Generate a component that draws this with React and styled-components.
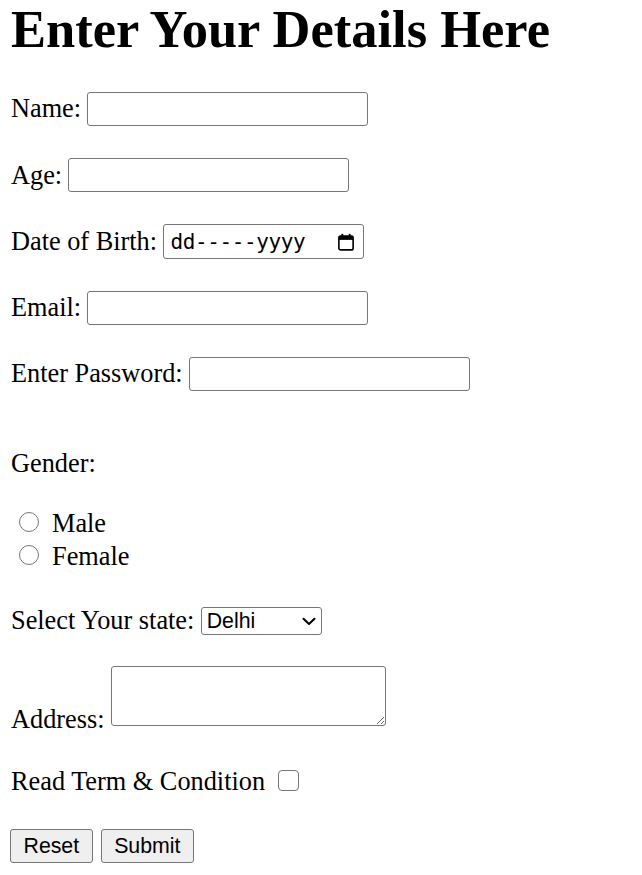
import styled, { createGlobalStyle } from 'styled-components'

const GlobalStyle = createGlobalStyle`
  html, body {
    margin: 0;
    padding: 0;
    background: #ffffff;
  }
  body {
    font-family: "Liberation Serif", "Times New Roman", serif;
    font-size: 26.3px;
    color: #000000;
  }
`

function CalendarIcon() {
  return (
    <svg width="20" height="20" viewBox="0 0 16 16" fill="none">
      <rect x="2.3" y="3.3" width="11.4" height="11" rx="1.4" stroke="#000" strokeWidth="1.3" />
      <rect x="2.3" y="3.3" width="11.4" height="3" fill="#000" />
      <rect x="4.3" y="1.5" width="1.5" height="2.5" fill="#000" />
      <rect x="10.2" y="1.5" width="1.5" height="2.5" fill="#000" />
    </svg>
  )
}

function Chevron() {
  return (
    <svg width="14" height="9" viewBox="0 0 14 9" fill="none">
      <path d="M1.5 1.8 L7 7 L12.5 1.8" stroke="#000" strokeWidth="2" strokeLinecap="round" strokeLinejoin="round" />
    </svg>
  )
}

export default function App() {
  return (
    <>
      <GlobalStyle />
      <Page>
        <Title>Enter Your Details Here</Title>
        <Form onSubmit={e => e.preventDefault()}>
          <Row $top={34}>
            <Label htmlFor="name">Name:</Label>
            <TextInput id="name" type="text" />
          </Row>
          <Row $top={32.25}>
            <Label htmlFor="age">Age:</Label>
            <TextInput id="age" type="text" />
          </Row>
          <Row $top={32.25}>
            <Label htmlFor="dob">Date of Birth:</Label>
            <DateBox id="dob">
              <DateText>dd-----yyyy</DateText>
              <CalendarIcon />
            </DateBox>
          </Row>
          <Row $top={32.25}>
            <Label htmlFor="email">Email:</Label>
            <TextInput id="email" type="email" />
          </Row>
          <Row $top={32.25}>
            <Label htmlFor="pass">Enter Password:</Label>
            <TextInput id="pass" type="password" $offset={-0.5} />
          </Row>

          <Caption $top={58.4}>Gender:</Caption>
          <RadioRow $top={28}>
            <Radio type="radio" name="gender" id="male" />
            <Label htmlFor="male">Male</Label>
          </RadioRow>
          <RadioRow $top={0}>
            <Radio type="radio" name="gender" id="female" />
            <Label htmlFor="female">Female</Label>
          </RadioRow>

          <Row $top={34.1} $height={28}>
            <Label htmlFor="state">Select Your state:</Label>
            <SelectWrap>
              <Select id="state" defaultValue="Delhi">
                <option>Delhi</option>
                <option>Mumbai</option>
                <option>Kolkata</option>
                <option>Chennai</option>
              </Select>
              <SelectArrow><Chevron /></SelectArrow>
            </SelectWrap>
          </Row>

          <AddressRow>
            <Label htmlFor="addr">Address:</Label>
            <Textarea id="addr" />
          </AddressRow>

          <CheckRow>
            <Label htmlFor="terms">Read Term &amp; Condition</Label>
            <Checkbox type="checkbox" id="terms" />
          </CheckRow>

          <Buttons>
            <Button type="reset">Reset</Button>
            <Button type="submit">Submit</Button>
          </Buttons>
        </Form>
      </Page>
    </>
  )
}

const Page = styled.div`
  padding: 0 11px 12px;
`

const Title = styled.h1`
  margin: 0;
  font-size: 52.5px;
  font-weight: bold;
  line-height: 58px;
`

const Form = styled.form`
  display: flex;
  flex-direction: column;
  align-items: flex-start;
`

const Row = styled.div`
  display: flex;
  align-items: center;
  gap: 6.4px;
  height: ${p => p.$height || 34}px;
  margin-top: ${p => p.$top}px;
`

const Label = styled.label`
  line-height: 29.4px;
  white-space: nowrap;
`

const Caption = styled.div`
  line-height: 29.4px;
  margin-top: ${p => p.$top}px;
`

const TextInput = styled.input`
  box-sizing: border-box;
  width: 281px;
  height: 34px;
  margin: 0 0 0 ${p => p.$offset ?? -1}px;
  padding: 1px 3px;
  border: 1px solid #767676;
  border-radius: 3px;
  background: #ffffff;
  font-family: "Liberation Sans", Arial, sans-serif;
  font-size: 21.3px;
  outline: none;
`

const DateBox = styled.div`
  box-sizing: border-box;
  width: 201px;
  height: 35px;
  display: flex;
  align-items: center;
  justify-content: space-between;
  padding: 0 7px 0 6px;
  border: 1px solid #767676;
  border-radius: 3px;
`

const DateText = styled.span`
  font-family: "DejaVu Sans Mono", "Liberation Mono", monospace;
  font-size: 21px;
  letter-spacing: -0.4px;
`

const RadioRow = styled.div`
  display: flex;
  align-items: center;
  height: 33px;
  margin-top: ${p => p.$top}px;
`

const Radio = styled.input`
  appearance: none;
  box-sizing: border-box;
  width: 20px;
  height: 20px;
  margin: 0 13px 3px 8px;
  border: 1.6px solid #767676;
  border-radius: 50%;
  background: #ffffff;

  &:checked {
    background: radial-gradient(circle, #0075ff 0 40%, #ffffff 45%);
    border-color: #0075ff;
  }
`

const SelectWrap = styled.div`
  position: relative;
  display: flex;
`

const Select = styled.select`
  appearance: none;
  box-sizing: border-box;
  width: 121px;
  height: 28px;
  margin: 0;
  padding: 0 24px 0 5px;
  border: 1px solid #767676;
  border-radius: 3px;
  background: #ffffff;
  color: #000000;
  font-family: "Liberation Sans", Arial, sans-serif;
  font-size: 21.3px;
  line-height: 26px;
`

const SelectArrow = styled.span`
  position: absolute;
  right: 6px;
  top: 10px;
  display: flex;
  pointer-events: none;
`

const AddressRow = styled.div`
  display: flex;
  align-items: flex-end;
  gap: 6.4px;
  margin-top: 31.5px;
`

const Textarea = styled.textarea`
  box-sizing: border-box;
  width: 275px;
  height: 60px;
  margin: 0 0 7.6px 0.5px;
  border: 1px solid #767676;
  border-radius: 3px;
  font-family: "Liberation Mono", monospace;
  font-size: 21px;
  resize: both;
`

const CheckRow = styled.div`
  display: flex;
  align-items: center;
  margin-top: 32.6px;
  height: 29.4px;
`

const Checkbox = styled.input`
  appearance: none;
  box-sizing: border-box;
  width: 21px;
  height: 21px;
  margin: 0 0 2px 13.3px;
  border: 1.6px solid #767676;
  border-radius: 4px;
  background: #ffffff;

  &:checked {
    background: #0075ff;
    border-color: #0075ff;
  }
`

const Buttons = styled.div`
  display: flex;
  gap: 8px;
  margin-top: 33.4px;
  margin-left: -1px;
`

const Button = styled.button`
  box-sizing: border-box;
  height: 34px;
  padding: 0 12.5px;
  border: 1px solid #767676;
  border-radius: 3px;
  background: #efefef;
  color: #000000;
  font-family: "Liberation Sans", Arial, sans-serif;
  font-size: 21.3px;
`
